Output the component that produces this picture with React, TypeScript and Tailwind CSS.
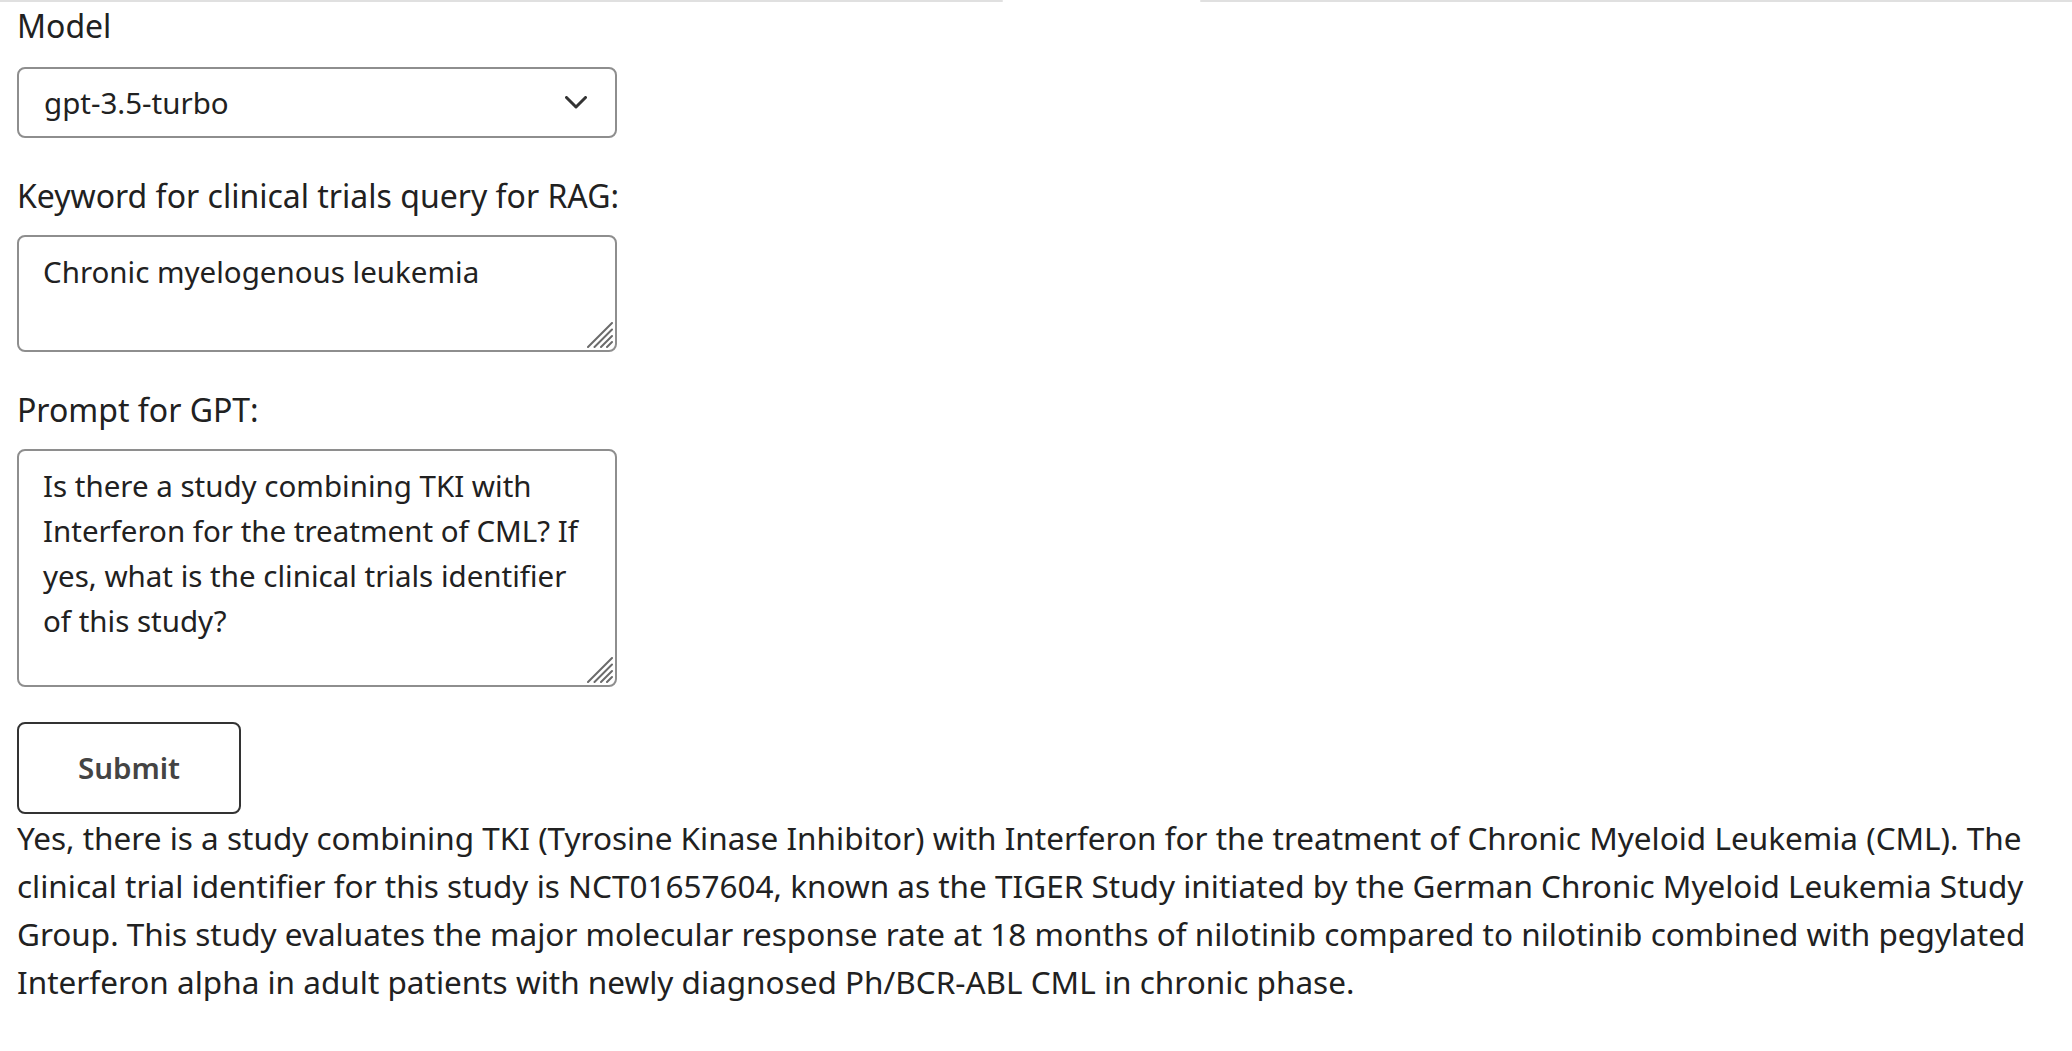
import React from "react";

function Grip() {
  return (
    <svg
      className="absolute right-[4px] bottom-[4px] pointer-events-none"
      width="26"
      height="26"
      viewBox="0 0 26 26"
      fill="none"
    >
      <path d="M1 25 L25 1 M7.5 25 L25 7.5 M14 25 L25 14 M20 25 L25 20" stroke="#6b6b6b" strokeWidth="2" strokeLinecap="round" />
    </svg>
  );
}

export default function App() {
  const font = { fontFamily: '"Noto Sans", "Open Sans", sans-serif' };
  return (
    <div className="min-h-screen bg-white" style={font}>
      <div className="flex h-[2px]">
        <div className="w-[1003px] bg-[#e0e0e0] rounded-r-[2px]" />
        <div className="w-[197px]" />
        <div className="flex-1 bg-[#e0e0e0] rounded-l-[2px]" />
      </div>
      <div className="px-[17px] text-[32px] leading-[48px] text-[#212121]">
        <div>Model</div>
        <div className="mt-[17px] w-[600px] h-[71px] border-2 border-[#8e8e8e] rounded-[8px] flex items-center justify-between pl-[25px] pr-[28px] text-[29.5px]">
          <span>gpt-3.5-turbo</span>
          <svg width="22" height="13" viewBox="0 0 22 13" fill="none">
            <path d="M1.5 1.5 L11 11 L20.5 1.5" stroke="#333" strokeWidth="3" strokeLinecap="round" strokeLinejoin="round" />
          </svg>
        </div>
        <div className="mt-[34px]">Keyword for clinical trials query for RAG:</div>
        <div className="relative mt-[15px] w-[600px]">
          <textarea
            className="block w-[600px] h-[117px] resize-none border-2 border-[#8e8e8e] rounded-[8px] px-[24px] py-[12px] text-[29.5px] leading-[45px] text-[#212121] outline-none"
            defaultValue="Chronic myelogenous leukemia"
          />
          <Grip />
        </div>
        <div className="mt-[34px]">Prompt for GPT:</div>
        <div className="relative mt-[15px] w-[600px]">
          <textarea
            className="block w-[600px] h-[238px] resize-none border-2 border-[#8e8e8e] rounded-[8px] px-[24px] py-[12px] text-[29.5px] leading-[45px] text-[#212121] outline-none"
            defaultValue="Is there a study combining TKI with Interferon for the treatment of CML? If yes, what is the clinical trials identifier of this study?"
          />
          <Grip />
        </div>
        <button className="mt-[35px] block w-[224px] h-[92px] border-2 border-[#333333] rounded-[8px] bg-white font-semibold text-[29.5px] text-[#444444]">
          Submit
        </button>
        <p className="mt-0 text-[31.5px]">
          Yes, there is a study combining TKI (Tyrosine Kinase Inhibitor) with Interferon for the treatment of Chronic Myeloid Leukemia (CML). The clinical trial identifier for this study is NCT01657604, known as the TIGER Study initiated by the German Chronic Myeloid Leukemia Study Group. This study evaluates the major molecular response rate at 18 months of nilotinib compared to nilotinib combined with pegylated Interferon alpha in adult patients with newly diagnosed Ph/BCR-ABL CML in chronic phase.
        </p>
      </div>
    </div>
  );
}
